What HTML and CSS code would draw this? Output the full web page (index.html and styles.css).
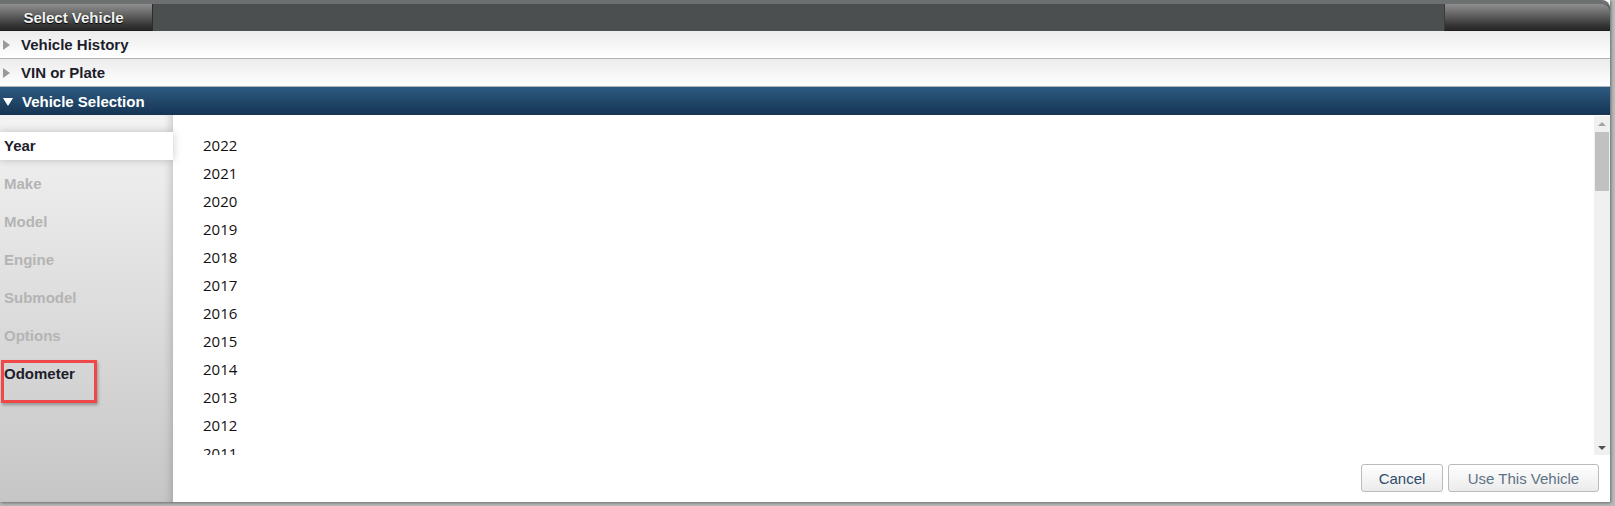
FILE: index.html
```html
<!DOCTYPE html>
<html>
<head>
<meta charset="utf-8">
<title>Select Vehicle</title>
<link rel="stylesheet" href="styles.css">
</head>
<body>
<div class="dialog">
  <div class="titlebar">
    <div class="tab tab-title">Select Vehicle</div>
    <div class="tab tab-right"></div>
  </div>
  <div class="section"><span class="tri-right"></span>Vehicle History</div>
  <div class="section"><span class="tri-right"></span>VIN or Plate</div>
  <div class="section section-active"><span class="tri-down"></span>Vehicle Selection</div>
  <div class="main">
    <div class="steps">
      <div class="step step-current">Year</div>
      <div class="step step-disabled">Make</div>
      <div class="step step-disabled">Model</div>
      <div class="step step-disabled">Engine</div>
      <div class="step step-disabled">Submodel</div>
      <div class="step step-disabled">Options</div>
      <div class="step step-enabled">Odometer</div>
      <div class="highlight"></div>
    </div>
    <div class="content">
      <div class="listbox">
        <ul class="years">
          <li>2022</li><li>2021</li><li>2020</li><li>2019</li><li>2018</li><li>2017</li><li>2016</li><li>2015</li><li>2014</li><li>2013</li>
          <li>2012</li><li>2011</li><li>2010</li><li>2009</li><li>2008</li><li>2007</li><li>2006</li><li>2005</li><li>2004</li><li>2003</li>
          <li>2002</li><li>2001</li><li>2000</li><li>1999</li><li>1998</li><li>1997</li><li>1996</li><li>1995</li><li>1994</li><li>1993</li>
          <li>1992</li><li>1991</li><li>1990</li><li>1989</li><li>1988</li><li>1987</li><li>1986</li><li>1985</li><li>1984</li><li>1983</li>
          <li>1982</li><li>1981</li><li>1980</li><li>1979</li><li>1978</li><li>1977</li><li>1976</li><li>1975</li><li>1974</li><li>1973</li>
          <li>1972</li><li>1971</li><li>1970</li><li>1969</li><li>1968</li><li>1967</li><li>1966</li><li>1965</li><li>1964</li><li>1963</li>
          <li>1962</li><li>1961</li><li>1960</li>
        </ul>
        <div class="scrollbar">
          <div class="sb-btn"><span class="sb-up"></span></div>
          <div class="sb-thumb"></div>
          <div class="sb-track"></div>
          <div class="sb-btn"><span class="sb-down"></span></div>
        </div>
      </div>
      <div class="footer">
        <button class="btn btn-cancel">Cancel</button>
        <button class="btn btn-use">Use This Vehicle</button>
      </div>
    </div>
  </div>
</div>
</body>
</html>
```

FILE: styles.css
```css
html, body {
  margin: 0;
  padding: 0;
}
body {
  width: 1615px;
  height: 506px;
  overflow: hidden;
  background: #b9bbbb;
  font-family: "Liberation Sans", Arial, sans-serif;
}
.dialog {
  width: 1610px;
  height: 502px;
  background: #ffffff;
  display: flex;
  flex-direction: column;
  box-shadow: 1px 1px 3px rgba(0,0,0,0.45);
}
.titlebar {
  height: 27px;
  border-top: 4px solid #6d7070;
  background: #4b4f4f;
  display: flex;
  border-radius: 0 8px 0 0;
}
.tab {
  height: 26px;
  background: linear-gradient(#8f8f8f 0%, #6a6a6a 35%, #3c3c3c 75%, #262626 100%);
  border-bottom: 1px solid #1f1f1f;
}
.tab-title {
  width: 152px;
  border-right: 1px solid #2c2c2c;
  color: #f2f2f2;
  font-weight: bold;
  font-size: 15px;
  line-height: 27px;
  text-align: center;
  text-indent: -5px;
  text-shadow: 0 1px 1px #000;
}
.tab-right {
  width: 165px;
  margin-left: auto;
  border-left: 1px solid #3a3a3a;
  border-radius: 0 8px 0 0;
}
.section {
  height: 27px;
  border-bottom: 1px solid #b3b3b3;
  background: linear-gradient(#ececec, #ffffff);
  display: flex;
  align-items: center;
  font-weight: bold;
  font-size: 15px;
  color: #1d1d2b;
}
.section-active {
  height: 28px;
  border-bottom: none;
  background: linear-gradient(#2c5b81, #163453);
  color: #ffffff;
}
.tri-right {
  width: 0;
  height: 0;
  border-top: 5px solid transparent;
  border-bottom: 5px solid transparent;
  border-left: 7px solid #9a9a9a;
  margin: 0 11px 0 3px;
}
.tri-down {
  width: 0;
  height: 0;
  border-left: 5px solid transparent;
  border-right: 5px solid transparent;
  border-top: 8px solid #ffffff;
  margin: 1px 9px 0 3px;
}
.main {
  flex: 1;
  display: flex;
  min-height: 0;
}
.steps {
  position: relative;
  width: 173px;
  flex: none;
  padding-top: 17px;
  box-sizing: border-box;
  background: linear-gradient(#f3f3f3, #c6c6c6);
  box-shadow: inset -8px 0 8px -6px rgba(0,0,0,0.18);
  display: flex;
  flex-direction: column;
  gap: 10px;
}
.step {
  height: 28px;
  line-height: 28px;
  padding-left: 4px;
  font-weight: bold;
  font-size: 15px;
}
.step-current {
  background: #ffffff;
  color: #1d1d2b;
  box-shadow: 0 0 9px rgba(0,0,0,0.22);
}
.step-disabled {
  color: #b4b4b4;
}
.step-enabled {
  color: #1d1d2b;
}
.highlight {
  position: absolute;
  left: 1px;
  top: 245px;
  width: 90px;
  height: 37px;
  border: 3px solid #f04848;
  box-shadow: 1px 2px 3px rgba(0,0,0,0.3);
}
.content {
  flex: 1;
  display: flex;
  flex-direction: column;
  min-width: 0;
  background: #ffffff;
}
.listbox {
  display: flex;
  height: 339px;
  margin-top: 1px;
}
.years {
  flex: 1;
  list-style: none;
  margin: 0;
  padding: 15px 0 0 30px;
  overflow: hidden;
  font-family: "Open Sans", sans-serif;
  font-size: 15px;
  color: #111111;
}
.years li {
  height: 28px;
  line-height: 28px;
}
.scrollbar {
  width: 16px;
  flex: none;
  background: #f0f0f0;
  display: flex;
  flex-direction: column;
}
.sb-btn {
  height: 15px;
  display: flex;
  align-items: center;
  justify-content: center;
}
.sb-up {
  width: 0;
  height: 0;
  border-left: 4px solid transparent;
  border-right: 4px solid transparent;
  border-bottom: 4px solid #a3a3a3;
}
.sb-down {
  width: 0;
  height: 0;
  border-left: 4px solid transparent;
  border-right: 4px solid transparent;
  border-top: 4px solid #505050;
}
.sb-thumb {
  height: 59px;
  margin: 1px 1px 0 1px;
  background: #c1c1c1;
}
.sb-track {
  flex: 1;
}
.footer {
  display: flex;
  justify-content: flex-end;
  gap: 5px;
  padding: 9px 11px 0 0;
}
.btn {
  height: 28px;
  border: 1px solid #bbbbbb;
  border-radius: 3px;
  background: linear-gradient(#ffffff, #ebebeb);
  font-family: "Liberation Sans", Arial, sans-serif;
  font-size: 15px;
  padding: 0;
}
.btn-cancel {
  width: 82px;
  color: #2f4c6c;
}
.btn-use {
  width: 151px;
  color: #5d7286;
}
```
